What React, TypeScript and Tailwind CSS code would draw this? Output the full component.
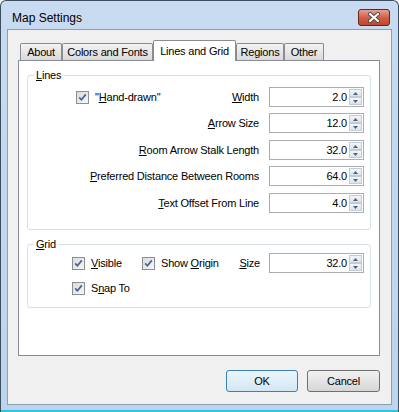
import React from 'react';

function CloseBtn() {
  return (
    <div className="mt-[8px] mr-[8px] w-[32px] h-[17px] rounded-[3px] border border-[#6b2318] bg-gradient-to-b from-[#e4a293] via-[#d25f48] to-[#c2452d] flex items-center justify-center">
      <svg width="14" height="11" viewBox="0 0 14 11">
        <path d="M3 2 L11 9 M11 2 L3 9" stroke="#4a4a4a" strokeWidth="4" strokeLinecap="round" />
        <path d="M3 2 L11 9 M11 2 L3 9" stroke="#ffffff" strokeWidth="2.2" strokeLinecap="round" />
      </svg>
    </div>
  );
}

function Check({ children }: { children: React.ReactNode }) {
  return (
    <div className="flex items-center gap-[6px]">
      <span className="w-[13px] h-[13px] border border-[#8f8f8f] bg-gradient-to-br from-[#d8dadd] to-[#f7f7f7] flex items-center justify-center">
        <svg width="9" height="9" viewBox="0 0 9 9">
          <path d="M1.2 4.4 L3.4 6.8 L7.8 1.4" stroke="#4d5f99" strokeWidth="1.7" fill="none" />
        </svg>
      </span>
      <span className="leading-[13px]">{children}</span>
    </div>
  );
}

function SpinBtn({ up }: { up?: boolean }) {
  return (
    <span className="flex-1 border border-[#c3ccd6] bg-gradient-to-b from-[#f4f6f8] to-[#dde3ea] flex items-center justify-center">
      <svg width="5" height="3" viewBox="0 0 5 3">
        <path d={up ? 'M0 3 L2.5 0 L5 3 Z' : 'M0 0 L5 0 L2.5 3 Z'} fill="#4d6185" />
      </svg>
    </span>
  );
}

function Spin({ value }: { value: string }) {
  return (
    <div className="w-[95px] h-[20px] border border-[#abadb3] bg-white flex">
      <span className="flex-1 text-right pr-[2px] leading-[18px]">{value}</span>
      <span className="w-[13px] my-[1px] mr-[1px] flex flex-col">
        <SpinBtn up />
        <SpinBtn />
      </span>
    </div>
  );
}

function Row({ label, value, left, className = '' }: { label: React.ReactNode; value: string; left?: React.ReactNode; className?: string }) {
  return (
    <div className={`flex items-center h-[20px] ${className}`}>
      <div className={`flex-1 flex items-center pr-[10px] ${left ? 'justify-between pl-[48px]' : 'justify-end'}`}>
        {left}
        <span>{label}</span>
      </div>
      <Spin value={value} />
    </div>
  );
}

function Tab({ label, w, active }: { label: string; w: string; active?: boolean }) {
  if (active) {
    return (
      <div className={`${w} h-[21px] border border-b-0 border-[#898c95] bg-white rounded-t-[2px] flex items-center justify-center`}>
        {label}
      </div>
    );
  }
  return (
    <div className={`${w} h-[17px] mb-[1px] border border-b-0 border-[#898c95] bg-gradient-to-b from-[#f3f3f3] to-[#dadada] rounded-t-[2px] flex items-center justify-center`}>
      {label}
    </div>
  );
}

function WinButton({ label, primary }: { label: string; primary?: boolean }) {
  return (
    <div
      className={`h-[22px] rounded-[3px] border flex items-center justify-center ${
        primary
          ? 'w-[72px] border-[#3c7fb1] bg-gradient-to-b from-[#eaf6fd] to-[#d4e6f3]'
          : 'w-[73px] border-[#707070] bg-gradient-to-b from-[#f2f2f2] to-[#d6d6d6]'
      }`}
    >
      {label}
    </div>
  );
}

export default function App() {
  return (
    <div className="w-[399px] h-[412px] font-['Liberation_Sans',Arial,sans-serif] text-[11px] tracking-[-0.2px] text-black bg-white">
      <div className="w-full h-full flex flex-col rounded-t-[6px] border border-b-0 border-[#3d4e61] bg-gradient-to-b from-[#c8dbf0] to-[#bcd4ec]">
        {/* title bar */}
        <div className="h-[28px] flex items-start justify-between">
          <span className="text-[12px] tracking-normal pl-[11px] pt-[10px] leading-[14px]">Map Settings</span>
          <CloseBtn />
        </div>

        {/* client area */}
        <div className="mx-[6px] h-[376px] border border-[#8ba0b8] bg-[#f0f0f0] flex flex-col pt-[10px] pl-[10px] pr-[11px]">
          <div className="relative z-10 flex items-end h-[21px] pl-[2px]">
            <Tab label="About" w="w-[42px]" />
            <Tab label="Colors and Fonts" w="w-[91px]" />
            <Tab label="Lines and Grid" w="w-[83px]" active />
            <Tab label="Regions" w="w-[48px]" />
            <Tab label="Other" w="w-[40px]" />
          </div>

          <div className="-mt-[1px] h-[296px] border border-[#898c95] bg-white pt-[8px] px-[8px] flex flex-col gap-[8px]">
            <fieldset className="border border-[#d5dfe5] rounded-[3px]">
              <legend className="ml-[6px] px-[2px] leading-[13px]">
                <u>L</u>ines
              </legend>
              <div className="flex flex-col pt-[5px] pb-[16px] pr-[6px]">
                <Row
                  label={<><u>W</u>idth</>}
                  value="2.0"
                  left={<Check>"<u>H</u>and-drawn"</Check>}
                />
                <Row className="mt-[6px]" label={<><u>A</u>rrow Size</>} value="12.0" />
                <Row className="mt-[7px]" label={<><u>R</u>oom Arrow Stalk Length</>} value="32.0" />
                <Row className="mt-[6px]" label={<><u>P</u>referred Distance Between Rooms</>} value="64.0" />
                <Row className="mt-[7px]" label={<><u>T</u>ext Offset From Line</>} value="4.0" />
              </div>
            </fieldset>

            <fieldset className="border border-[#d5dfe5] rounded-[3px]">
              <legend className="ml-[6px] px-[2px] leading-[13px]">
                <u>G</u>rid
              </legend>
              <div className="flex flex-col pt-[2px] pb-[12px] pr-[6px] pl-[44px]">
                <div className="flex items-center h-[20px]">
                  <div className="w-[70px]">
                    <Check><u>V</u>isible</Check>
                  </div>
                  <Check>Show <u>O</u>rigin</Check>
                  <span className="flex-1 text-right pr-[9px]">
                    <u>S</u>ize
                  </span>
                  <Spin value="32.0" />
                </div>
                <div className="mt-[9px]">
                  <Check>S<u>n</u>ap To</Check>
                </div>
              </div>
            </fieldset>
          </div>

          <div className="mt-[14px] flex justify-end gap-[9px]">
            <WinButton label="OK" primary />
            <WinButton label="Cancel" />
          </div>
        </div>

        <div className="flex-1" />
        <div className="h-[2px] bg-[#33c1e4]" />
      </div>
    </div>
  );
}
